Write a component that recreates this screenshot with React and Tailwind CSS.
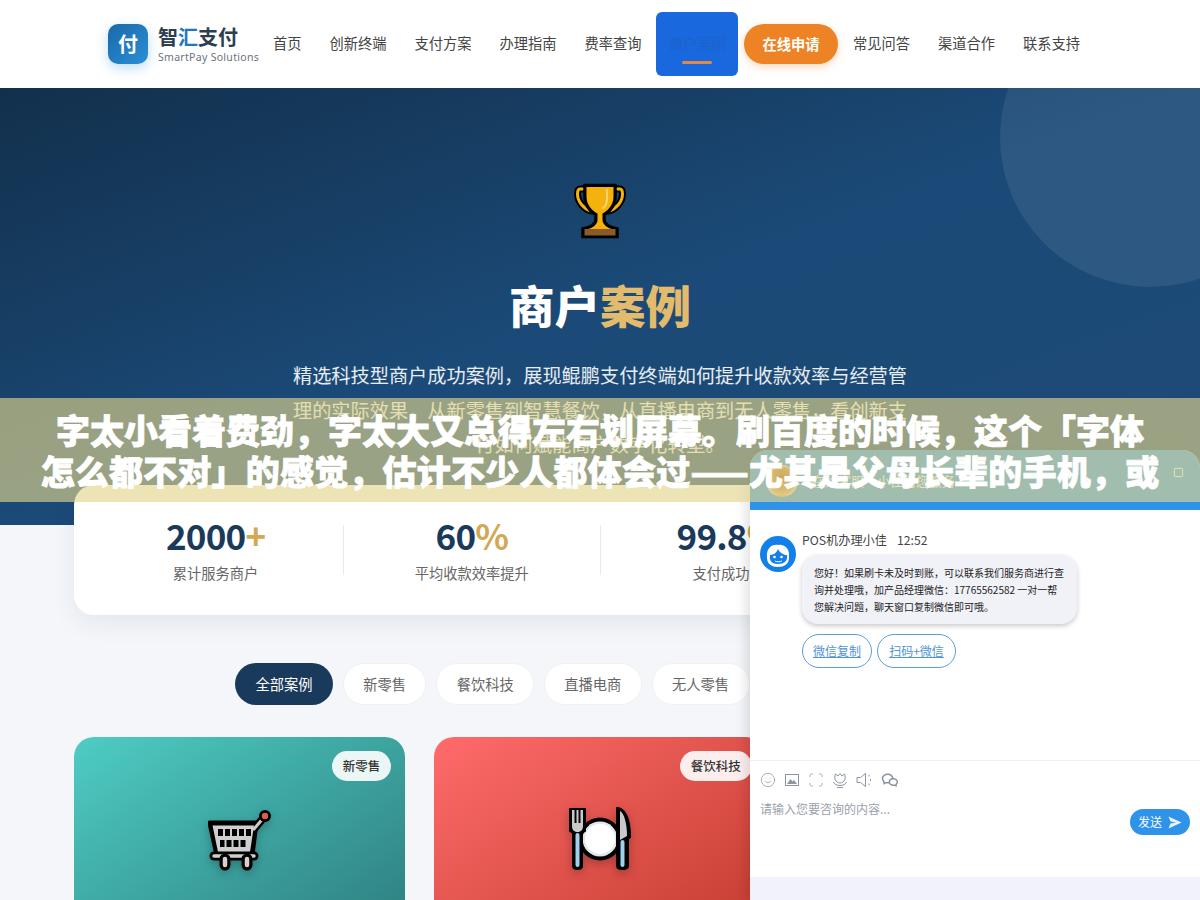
import React from 'react';
import { Smile, Scan, Square } from 'lucide-react';
import { RiWechatLine } from 'react-icons/ri';

const navLeft = ['首页', '创新终端', '支付方案', '办理指南', '费率查询'];
const navRight = ['常见问答', '渠道合作', '联系支持'];
const filters = ['全部案例', '新零售', '餐饮科技', '直播电商', '无人零售', '智能硬件', '跨境支付'];
const stats = [
  { num: '2000', unit: '+', label: '累计服务商户' },
  { num: '60', unit: '%', label: '平均收款效率提升' },
  { num: '99.8', unit: '%', label: '支付成功率' },
  { num: '24', unit: 'h', label: '全天候技术支持' },
];

function Trophy() {
  return (
    <svg width="52" height="56" viewBox="0 0 52 56" className="mx-auto">
      <path d="M13 6H6C4 6 3.500 8 3.500 11C3.500 19 10 26 17 28" fill="none" stroke="#000" strokeWidth="7" strokeLinecap="round" />
      <path d="M39 6H46C48 6 48.500 8 48.500 11C48.500 19 42 26 35 28" fill="none" stroke="#000" strokeWidth="7" strokeLinecap="round" />
      <path d="M13 6H6C4 6 3.500 8 3.500 11C3.500 19 10 26 17 28" fill="none" stroke="#f5b20c" strokeWidth="3" strokeLinecap="round" />
      <path d="M39 6H46C48 6 48.500 8 48.500 11C48.500 19 42 26 35 28" fill="none" stroke="#f5b20c" strokeWidth="3" strokeLinecap="round" />
      <path d="M10 1.500H42V14C42 24 34 31 31 32V37C31 41 37 44 44 45V54.500H8V45C15 44 21 41 21 37V32C18 31 10 24 10 14Z" fill="#000" stroke="#000" strokeWidth="1.500" strokeLinejoin="round" />
      <path d="M12.500 4H39.500V14C39.500 23 32 29 28.500 30.500V37C28.500 41 33 45 38 46H14C19 45 23.500 41 23.500 37V30.500C20 29 12.500 23 12.500 14Z" fill="#f5b20c" />
      <path d="M33 7V15C33 20 31 24 29 25" fill="none" stroke="#fbd97a" strokeWidth="1.800" strokeLinecap="round" />
      <rect x="10.500" y="46" width="31" height="6.500" fill="#8a5a2b" />
    </svg>
  );
}

function Cart() {
  return (
    <svg width="64" height="62" viewBox="0 0 64 62" className="drop-shadow-[0_3px_5px_rgba(0,0,0,0.25)]">
      <path d="M2 14H48L44 46H9Z" fill="#000" stroke="#000" strokeWidth="5" strokeLinejoin="round" />
      <path d="M46 20L57 7" fill="none" stroke="#000" strokeWidth="8" strokeLinecap="round" />
      <path d="M46 20L57 7" fill="none" stroke="#ccc" strokeWidth="3" strokeLinecap="round" />
      <circle cx="57" cy="7" r="6" fill="#000" />
      <circle cx="57" cy="7" r="3.200" fill="#d9604f" />
      <path d="M4.500 16.500H46L42 43H10Z" fill="#cfcfcf" />
      <g fill="#000">
        <rect x="10" y="20" width="5" height="7" /><rect x="17" y="20" width="5" height="7" /><rect x="24" y="20" width="5" height="7" /><rect x="31" y="20" width="5" height="7" /><rect x="38" y="20" width="5" height="7" />
        <rect x="12" y="31" width="4.500" height="7" /><rect x="18.500" y="31" width="5" height="7" /><rect x="25.500" y="31" width="5" height="7" /><rect x="32.500" y="31" width="5" height="7" />
      </g>
      <path d="M6 47H46" stroke="#000" strokeWidth="9" strokeLinecap="round" />
      <path d="M6 47H46" stroke="#cfcfcf" strokeWidth="3.500" strokeLinecap="round" />
      <path d="M17 50V56M39 50V56" stroke="#000" strokeWidth="11" strokeLinecap="round" />
      <path d="M17 50V56M39 50V56" stroke="#d8d0cc" strokeWidth="4.500" strokeLinecap="round" />
    </svg>
  );
}

function Plate() {
  return (
    <svg width="64" height="64" viewBox="0 0 64 64" className="drop-shadow-[0_3px_5px_rgba(0,0,0,0.25)]">
      <circle cx="32" cy="32" r="21.500" fill="#000" />
      <circle cx="32" cy="32" r="17.500" fill="#e4e6e8" />
      <circle cx="32" cy="32" r="15" fill="#fff" />
      <path d="M2 2H17V24L14 26V59C14 63 5 63 5 59V26L2 24Z" fill="#000" stroke="#000" strokeWidth="2" strokeLinejoin="round" />
      <path d="M4 3V19C4 23 6 24 8 25H11C13 24 15 23 15 19V3H12.500V16H10.500V3H8.500V16H6.500V3Z" fill="#c9c9c9" />
      <rect x="7.500" y="26" width="4" height="34" rx="2" fill="#9fd0ec" />
      <path d="M49 1C56 1 62 10 62 30L60 32V59C60 63 49 63 49 59Z" fill="#000" stroke="#000" strokeWidth="2" strokeLinejoin="round" />
      <path d="M52 4C56 6 59 16 59 29L52 33Z" fill="#c9c9c9" />
      <rect x="52.500" y="33" width="4" height="27" rx="2" fill="#9fd0ec" />
    </svg>
  );
}

function AgentFace() {
  return (
    <svg width="36" height="36" viewBox="0 0 36 36">
      <circle cx="18" cy="18" r="18" fill="#1280e8" />
      <path d="M7 22C6 12 12 8 18 9C25 8 30 13 29 22C29 28 24 31 18 31C12 31 7 28 7 22Z" fill="#fff" />
      <path d="M10 19C14 19 17 16 18 13C20 17 24 19 27 19C28 25 24 28 18 28C12 28 9 25 10 19Z" fill="#1280e8" />
      <circle cx="14.500" cy="21" r="1.300" fill="#fff" />
      <circle cx="21.500" cy="21" r="1.300" fill="#fff" />
      <path d="M15 25C17 26 20 26 22 25" fill="none" stroke="#fff" strokeWidth="1" />
    </svg>
  );
}

function PictureIcon() {
  return (
    <svg width="16" height="16" viewBox="0 0 16 16" fill="none" stroke="#8b94a3" strokeWidth="1">
      <rect x="1.500" y="2.500" width="13" height="11" />
      <path d="M3 12L6.500 7L8.500 9.500L10 8L13 12Z" fill="#8b94a3" stroke="none" />
    </svg>
  );
}

function Tulip() {
  return (
    <svg width="16" height="16" viewBox="0 0 16 16" fill="none" stroke="#8b94a3" strokeWidth="1">
      <path d="M3.500 2L6 4L8 1.500L10 4L12.500 2C14 6 13 10.500 8 11C3 10.500 2 6 3.500 2Z" />
      <path d="M1.500 10C2.500 12.500 5 13.500 8 13.500C11 13.500 13.500 12.500 14.500 10M5 15.500H11" />
    </svg>
  );
}

function Speaker() {
  return (
    <svg width="16" height="16" viewBox="0 0 16 16" fill="none" stroke="#8b94a3" strokeWidth="1">
      <path d="M1 5.500H4.500L9.500 1.500V14.500L4.500 10.500H1Z" strokeLinejoin="round" />
      <path d="M13 3V4M14.500 7.500V8.500M13 12V13" strokeLinecap="round" />
    </svg>
  );
}

function ChatWidget() {
  return (
    <div className="absolute left-[750px] top-[450px] z-10 flex h-[450px] w-[450px] flex-col rounded-t-[18px] bg-white shadow-[-4px_0_12px_rgba(0,0,0,0.12)]">
      <div className="flex h-[60px] items-start justify-between rounded-t-[18px] bg-[#2f93ea] px-[16px] pt-[15px]">
        <div className="flex items-center gap-[14px]">
          <div className="h-[32px] w-[32px] rounded-full border-2 border-white/30 bg-[radial-gradient(circle_at_50%_35%,#a9621a_0%,#c98a3a_50%,#e7cfa8_100%)]" />
          <span className="text-[13px] text-white">在线客服·小佳为您服务</span>
        </div>
        <Square size={11} className="mt-[2px] text-white" />
      </div>

      <div className="flex h-[250px] gap-[6px] pl-[10px] pt-[26px]">
        <AgentFace />
        <div className="-mt-[6px] w-[275px]">
          <div className="text-[12.200px] leading-[20px] text-[#444]">
            POS机办理小佳<span className="ml-[10px]">12:52</span>
          </div>
          <div className="mt-[5px] rounded-[16px] bg-[#f1f2f8] px-[12px] py-[9px] text-[10px] leading-[17px] text-[#222] shadow-[0_2px_5px_rgba(0,0,0,0.22)]">
            您好！如果刷卡未及时到账，可以联系我们服务商进行查询并处理哦，加产品经理微信：17765562582 一对一帮您解决问题，聊天窗口复制微信即可哦。
          </div>
          <div className="mt-[10px] flex gap-[5px]">
            <span className="flex h-[34px] w-[70px] items-center justify-center rounded-full border border-[#5a9fd4] text-[12px] text-[#4f94d6] underline">微信复制</span>
            <span className="flex h-[34px] w-[79px] items-center justify-center rounded-full border border-[#5a9fd4] text-[12px] text-[#4f94d6] underline">扫码+微信</span>
          </div>
        </div>
      </div>

      <div className="relative flex-1 border-t border-[#edf0f5] px-[10px]">
        <div className="flex h-[36px] items-center gap-[8px] pt-px text-[#8b94a3]">
          <Smile size={16} strokeWidth={1.100} />
          <PictureIcon />
          <Scan size={16} strokeWidth={1.100} />
          <Tulip />
          <Speaker />
          <RiWechatLine size={18} className="ml-[1px]" />
        </div>
        <div className="mt-[3px] text-[12px] leading-[18px] text-[#9aa1ad]">请输入您要咨询的内容...</div>
        <div className="absolute right-[10px] top-[48px] flex h-[26px] w-[60px] items-center justify-center gap-[6px] rounded-full bg-[#2f93ea] text-[12px] text-white">
          发送
          <svg width="14" height="13" viewBox="0 0 14 13"><path d="M0.500 0.500L13.500 6.500L0.500 12.500L2.500 7.500L8 6.500L2.500 5.500Z" fill="#e8f3fd" /></svg>
        </div>
      </div>
      <div className="h-[23px] bg-[#f1f2fa]" />
    </div>
  );
}

export default function App() {
  return (
    <div className="relative h-[900px] w-[1200px] overflow-hidden bg-[#f4f6f9] font-['Noto_Sans_CJK_SC','Noto_Sans',sans-serif]">
      {/* Top nav */}
      <header className="flex h-[88px] items-center bg-white pl-[108px]">
        <div className="flex w-[151px] items-center gap-[10px]">
          <div className="flex h-[40px] w-[40px] shrink-0 items-center justify-center rounded-[10px] bg-gradient-to-br from-[#1a6aa8] to-[#2a8fd8] text-[20px] font-bold text-white shadow-[0_4px_12px_rgba(42,143,216,0.3)]">付</div>
          <div>
            <div className="whitespace-nowrap text-[20px] font-bold leading-[26px] text-[#2c3e50]">智<span className="text-[#1f78bd]">汇</span>支付</div>
            <div className="whitespace-nowrap font-['Noto_Sans',sans-serif] text-[10.500px] leading-[15px] tracking-[0.3px] text-[#6b7280]">SmartPay Solutions</div>
          </div>
        </div>
        <nav className="flex items-center text-[14.250px] leading-[20px] text-[#444]">
          {navLeft.map((n) => (
            <span key={n} className="-mt-[2px] whitespace-nowrap px-[14px]">{n}</span>
          ))}
          <span className="relative ml-[0.5px] flex h-[64px] w-[82px] items-center justify-center rounded-[6px] bg-[#1a68dd] pb-[2px] text-[#1b62cc]">
            商户案例
            <span className="absolute bottom-[12px] left-[26px] h-[3px] w-[30px] rounded-full bg-[#e08a45]" />
          </span>
          <span className="ml-[6px] mr-px flex h-[40px] w-[94px] items-center justify-center rounded-full bg-[#ee8325] pb-[1px] font-bold text-white shadow-[0_3px_8px_rgba(240,130,36,0.3)]">在线申请</span>
          {navRight.map((n) => (
            <span key={n} className="-mt-[2px] whitespace-nowrap px-[14px]">{n}</span>
          ))}
        </nav>
      </header>

      {/* Hero */}
      <section className="relative h-[437px] overflow-hidden bg-gradient-to-br from-[#12304c] via-[#1b4a78] to-[#1e4a75] pt-[95px] text-center">
        <div className="absolute right-[-100px] top-[-101px] h-[300px] w-[300px] rounded-full bg-white/[0.08]" />
        <Trophy />
        <h1 className="mt-[36px] text-[45.500px] font-black leading-[58px] text-white">
          商户<span className="text-[#e3bb6c]">案例</span>
        </h1>
        <p className="mx-auto mt-[25px] w-[620px] text-[19.200px] leading-[34.500px] text-white/90">
          精选科技型商户成功案例，展现鲲鹏支付终端如何提升收款效率与经营管理的实际效果，从新零售到智慧餐饮，从直播电商到无人零售，看创新支付如何赋能商户数字化转型。
        </p>
      </section>

      {/* Stats */}
      <div className="relative mx-[74px] -mt-[40px] flex h-[130px] items-center rounded-[20px] bg-white px-[14px] shadow-[0_8px_24px_rgba(26,58,92,0.08)]">
        {stats.map((s, i) => (
          <React.Fragment key={s.label}>
            {i > 0 && <div className="h-[50px] w-px bg-[#e8eaed]" />}
            <div className="flex-1 text-center">
              <div className="-mt-[2px] text-[35px] font-bold leading-[40px] tracking-[-0.8px] text-[#1a3a5c]">
                {s.num}<span className="text-[#d4a853]">{s.unit}</span>
              </div>
              <div className="mt-[8px] text-[14.250px] leading-[20px] text-[#666]">{s.label}</div>
            </div>
          </React.Fragment>
        ))}
      </div>

      {/* Filters */}
      <div className="mt-[48px] flex justify-center gap-[9.700px]">
        {filters.map((f, i) => (
          <span key={f} className={`flex h-[42px] items-center rounded-full text-[14.250px] ${i === 0 ? 'bg-[#1a3a5c] px-[20.500px] text-white' : 'border border-[#f0f1f3] bg-white px-[19.500px] text-[#666]'}`}>{f}</span>
        ))}
      </div>

      {/* Case cards */}
      <div className="mx-[74px] mt-[32px] grid grid-cols-3 gap-[29px]">
        <div className="relative flex h-[220px] justify-center rounded-t-[20px] bg-gradient-to-br from-[#4ecdc4] to-[#2c7a7b] pt-[72px]">
          <span className="absolute right-[14px] top-[14px] flex h-[30px] items-center rounded-full bg-white/90 px-[11px] text-[12.500px] font-medium text-[#333]">新零售</span>
          <Cart />
        </div>
        <div className="relative flex h-[220px] justify-center rounded-t-[20px] bg-gradient-to-br from-[#ff6b6b] to-[#c0392b] pt-[70px]">
          <span className="absolute right-[14px] top-[14px] flex h-[30px] items-center rounded-full bg-white/90 px-[11px] text-[12.500px] font-medium text-[#333]">餐饮科技</span>
          <Plate />
        </div>
        <div className="h-[220px] rounded-t-[20px] bg-gradient-to-br from-[#667eea] to-[#764ba2]" />
      </div>

      <ChatWidget />

      {/* Notice band over the page */}
      <div className="absolute inset-x-0 top-[398px] z-20 h-[104px] bg-[rgba(225,212,140,0.64)] pt-[11px] text-center text-[34px] font-black leading-[41px] text-white [-webkit-text-stroke:0.8px_white]">
        <div className="whitespace-nowrap">字太小看着费劲，字太大又总得左右划屏幕。刷百度的时候，这个「字体</div>
        <div className="whitespace-nowrap tracking-[0.2px]">怎么都不对」的感觉，估计不少人都体会过——尤其是父母长辈的手机，或</div>
      </div>
    </div>
  );
}
